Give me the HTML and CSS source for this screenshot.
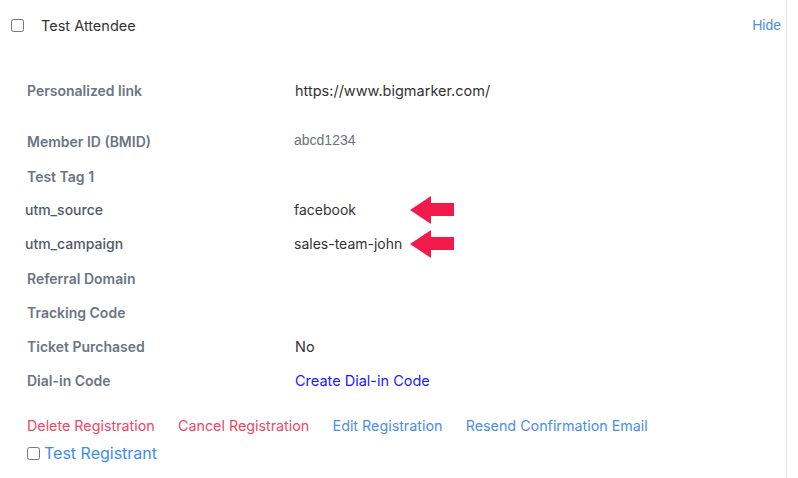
FILE: index.html
```html
<!DOCTYPE html>
<html>
<head>
<meta charset="utf-8">
<link rel="stylesheet" href="styles.css">
</head>
<body>
<div class="card">
  <div class="header">
    <input type="checkbox" class="cb">
    <span class="title">Test Attendee</span>
    <a class="hide">Hide</a>
  </div>
  <div class="details">
    <div class="row first"><span class="label">Personalized link</span><span class="value">https://www.bigmarker.com/</span></div>
    <div class="row member"><span class="label">Member ID (BMID)</span><span class="value id">abcd1234</span></div>
    <div class="row"><span class="label">Test Tag 1</span><span class="value"></span></div>
    <div class="row utmrow"><span class="label utm">utm_source</span><span class="value utmv">facebook<svg class="arrow" width="45" height="28" viewBox="0 0 45 28"><polygon points="0,14 21,0 21,7 44,7 44,20 21,20 21,28" fill="#f21a4a"/></svg></span></div>
    <div class="row utmrow"><span class="label utm">utm_campaign</span><span class="value utmv">sales-team-john<svg class="arrow" width="45" height="28" viewBox="0 0 45 28"><polygon points="0,14 21,0 21,7 44,7 44,20 21,20 21,28" fill="#f21a4a"/></svg></span></div>
    <div class="row"><span class="label">Referral Domain</span><span class="value"></span></div>
    <div class="row"><span class="label">Tracking Code</span><span class="value"></span></div>
    <div class="row"><span class="label">Ticket Purchased</span><span class="value">No</span></div>
    <div class="row"><span class="label">Dial-in Code</span><a class="value dial">Create Dial-in Code</a></div>
  </div>
  <div class="actions">
    <a class="danger">Delete Registration</a>
    <a class="danger">Cancel Registration</a>
    <a class="link">Edit Registration</a>
    <a class="link">Resend Confirmation Email</a>
  </div>
  <label class="registrant"><input type="checkbox" class="cb2"><span>Test Registrant</span></label>
</div>
</body>
</html>
```
FILE: styles.css
```css
html, body {
  margin: 0;
  padding: 0;
  background: #fff;
}
body {
  font-family: Inter, "Noto Sans", sans-serif;
  color: #333;
}
.card {
  width: 787px;
  height: 478px;
  border-right: 1px solid #e6e6e6;
  box-sizing: border-box;
}
.header {
  display: flex;
  align-items: center;
  height: 50px;
  padding: 0 5px 0 11px;
}
.cb {
  width: 13px;
  height: 13px;
  margin: 0;
}
.title {
  margin-left: 17px;
  font-size: 14.5px;
  color: #333;
}
.hide {
  margin-left: auto;
  font-family: "Liberation Sans", Arial, sans-serif;
  font-size: 14px;
  color: #4a8fe8;
}
.details {
  display: flex;
  flex-direction: column;
  padding-top: 23px;
}
.row {
  display: grid;
  grid-template-columns: 268px 1fr;
  align-items: center;
  height: 34px;
  padding-left: 27px;
}
.row.member {
  margin-top: 17px;
}
.row:nth-child(n+3) {
  padding-top: 1px;
  margin-bottom: -1px;
}
.row.utmrow {
  padding-top: 0;
  padding-bottom: 1px;
}
.label {
  font-size: 14px;
  font-weight: 600;
  color: #6b7585;
}
.label.utm {
  margin-left: -2px;
  font-weight: 500;
  color: #4f5968;
}
.value {
  position: relative;
  font-size: 14.5px;
  color: #333;
}
.value.utmv {
  font-size: 14px;
  margin-left: -1px;
}
.value.id {
  font-family: "Liberation Sans", Arial, sans-serif;
  font-size: 14px;
  color: #6b7280;
  margin-top: -2px;
  margin-left: -1px;
}
.value.dial {
  color: #1a1aff;
}
.arrow {
  position: absolute;
  left: 116px;
  top: -5px;
}
.actions {
  display: flex;
  gap: 23.3px;
  padding-left: 27px;
  margin-top: 21px;
  font-size: 14.3px;
}
.danger {
  color: #ef4764;
}
.link {
  color: #4a8fe8;
}
.registrant {
  display: flex;
  align-items: center;
  padding-left: 27px;
  margin-top: 9px;
  font-size: 16px;
  color: #3b8df0;
}
.cb2 {
  width: 13px;
  height: 13px;
  margin: 0 4px 0 0;
}
```
